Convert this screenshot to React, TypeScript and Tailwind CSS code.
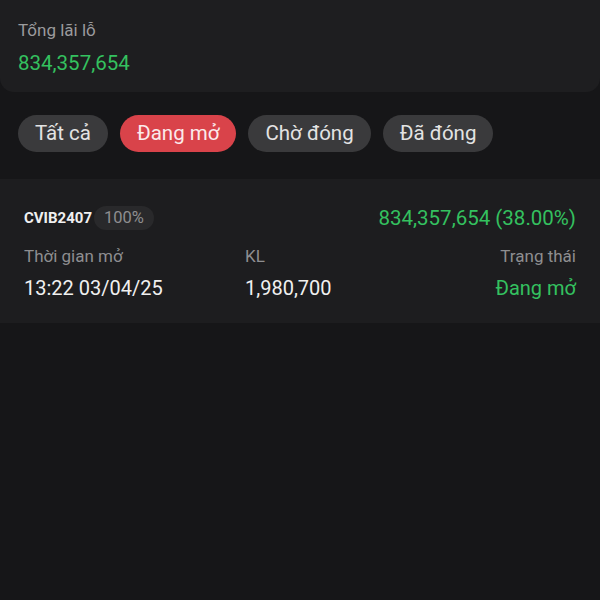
import { useState } from "react";

const tabs = ["Tất cả", "Đang mở", "Chờ đóng", "Đã đóng"];

const App = () => {
  const [active, setActive] = useState(1);

  return (
    <div className="min-h-screen w-full bg-[#161618] font-['Roboto',sans-serif]">
      {/* Summary */}
      <div className="h-[92px] bg-[#1e1e20] rounded-b-[14px] px-[18px] pt-[19px]">
        <div className="text-[17px] leading-[22px] text-[#9b9b9d]">Tổng lãi lỗ</div>
        <div className="mt-[9px] text-[20.5px] leading-[26px] text-[#34c15f]">834,357,654</div>
      </div>

      {/* Tabs */}
      <div className="flex gap-[12px] px-[18px] pt-[23px] pb-[27px]">
        {tabs.map((t, i) => (
          <button
            key={t}
            onClick={() => setActive(i)}
            className={`h-[37px] px-[17px] rounded-full text-[20.5px] leading-[37px] ${
              i === active ? "bg-[#d9434a] text-[#fbeaea]" : "bg-[#3a3a3c] text-[#e3e3e3]"
            }`}
          >
            {t}
          </button>
        ))}
      </div>

      {/* Position card */}
      <div className="bg-[#1d1d1f] h-[144px] px-[24px] pt-[24px]">
        <div className="flex items-center justify-between">
          <div className="flex items-center gap-[2px]">
            <span className="text-[15px] font-bold text-[#f0f0f0]">CVIB2407</span>
            <span className="h-[24px] px-[10px] rounded-full bg-[#29292b] text-[16.5px] leading-[24px] text-[#8e8e90]">
              100%
            </span>
          </div>
          <span className="text-[20.5px] text-[#34c15f]">834,357,654 (38.00%)</span>
        </div>

        <div className="mt-[9px] grid grid-cols-[221px_1fr_auto] text-[17px] text-[#8e8e90] leading-[26px]">
          <span>Thời gian mở</span>
          <span>KL</span>
          <span className="text-right">Trạng thái</span>
        </div>
        <div className="mt-[6px] grid grid-cols-[221px_1fr_auto] text-[20px] leading-[26px]">
          <span className="text-[#f0f0f0]">13:22 03/04/25</span>
          <span className="text-[#f0f0f0]">1,980,700</span>
          <span className="text-right text-[#34c15f]">Đang mở</span>
        </div>
      </div>
    </div>
  );
};

export default App;
